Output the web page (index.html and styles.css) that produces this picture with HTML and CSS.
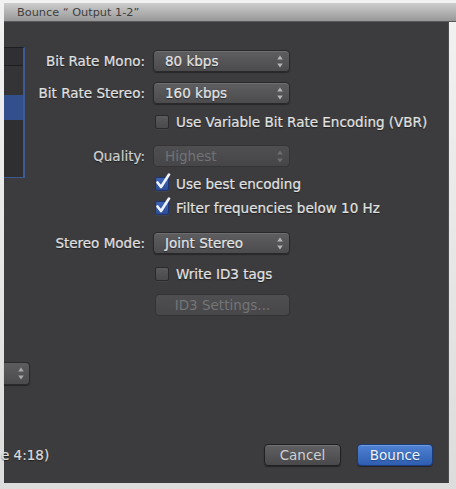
FILE: index.html
```html
<!DOCTYPE html>
<html>
<head>
<meta charset="utf-8">
<link rel="stylesheet" href="styles.css">
</head>
<body>
<div class="window">
  <div class="titlebar">Bounce “ Output 1-2”</div>
  <div class="panel">
    <div class="main">
      <div class="sidebar">
        <div class="list">
          <div class="list-row first"></div>
          <div class="list-row second"></div>
          <div class="list-row selected"></div>
          <div class="list-row rest"></div>
        </div>
        <div class="side-popup">
          <svg class="stepper" width="6" height="13" viewBox="0 0 6 13"><path d="M3 0.5 L5.8 4.5 H0.2 Z M3 12.5 L5.8 8.5 H0.2 Z" fill="#a8a8a8"/></svg>
        </div>
      </div>
      <div class="form">
        <div class="row">
          <span class="label">Bit Rate Mono:</span>
          <div class="popup"><span>80 kbps</span>
            <svg class="stepper" width="6" height="13" viewBox="0 0 6 13"><path d="M3 0.5 L5.8 4.5 H0.2 Z M3 12.5 L5.8 8.5 H0.2 Z" fill="#b4b4b4"/></svg>
          </div>
        </div>
        <div class="row mt-10">
          <span class="label">Bit Rate Stereo:</span>
          <div class="popup"><span>160 kbps</span>
            <svg class="stepper" width="6" height="13" viewBox="0 0 6 13"><path d="M3 0.5 L5.8 4.5 H0.2 Z M3 12.5 L5.8 8.5 H0.2 Z" fill="#b4b4b4"/></svg>
          </div>
        </div>
        <div class="row check-row mt-10">
          <span class="label"></span>
          <label class="check"><span class="box"></span><span>Use Variable Bit Rate Encoding (VBR)</span></label>
        </div>
        <div class="row mt-15">
          <span class="label dim">Quality:</span>
          <div class="popup disabled"><span>Highest</span>
            <svg class="stepper" width="6" height="13" viewBox="0 0 6 13"><path d="M3 0.5 L5.8 4.5 H0.2 Z M3 12.5 L5.8 8.5 H0.2 Z" fill="#6e6e6e"/></svg>
          </div>
        </div>
        <div class="row check-row mt-9">
          <span class="label"></span>
          <label class="check"><span class="box on"><svg class="tick" width="16" height="18" viewBox="0 0 16 18"><path d="M2.5 9.5 L6 14 L14 1.5" fill="none" stroke="#eef3ff" stroke-width="2.6" stroke-linecap="round" stroke-linejoin="round"/></svg></span><span>Use best encoding</span></label>
        </div>
        <div class="row check-row mt-8">
          <span class="label"></span>
          <label class="check"><span class="box on"><svg class="tick" width="16" height="18" viewBox="0 0 16 18"><path d="M2.5 9.5 L6 14 L14 1.5" fill="none" stroke="#eef3ff" stroke-width="2.6" stroke-linecap="round" stroke-linejoin="round"/></svg></span><span>Filter frequencies below 10 Hz</span></label>
        </div>
        <div class="row mt-16">
          <span class="label">Stereo Mode:</span>
          <div class="popup"><span>Joint Stereo</span>
            <svg class="stepper" width="6" height="13" viewBox="0 0 6 13"><path d="M3 0.5 L5.8 4.5 H0.2 Z M3 12.5 L5.8 8.5 H0.2 Z" fill="#b4b4b4"/></svg>
          </div>
        </div>
        <div class="row check-row mt-12">
          <span class="label"></span>
          <label class="check"><span class="box"></span><span>Write ID3 tags</span></label>
        </div>
        <div class="row mt-12">
          <span class="label"></span>
          <div class="button disabled wide">ID3 Settings...</div>
        </div>
      </div>
    </div>
    <div class="footer">
      <div class="status">e 4:18)</div>
      <div class="spacer"></div>
      <div class="button cancel">Cancel</div>
      <div class="button primary">Bounce</div>
    </div>
  </div>
</div>
</body>
</html>
```

FILE: styles.css
```css
html, body {
  margin: 0;
  padding: 0;
}
body {
  width: 456px;
  height: 489px;
  overflow: hidden;
  background: linear-gradient(#f2f2f2, #dcdcdc);
  font-family: "DejaVu Sans", "Liberation Sans", sans-serif;
  font-size: 13.5px;
  color: #e2e2e2;
}
.window {
  margin: 3px 0 0 4px;
  width: 452px;
}
.titlebar {
  height: 18px;
  line-height: 19px;
  padding-left: 13px;
  font-size: 11.3px;
  color: #3e3e3e;
  background: linear-gradient(#cdcdcd, #a8a8a8 70%, #979797);
  border-bottom: 1px solid #5a5a5a;
  white-space: nowrap;
}
.panel {
  height: 461px;
  width: 444px;
  background: #3c3c3e;
  border-right: 1px solid #4c4c4e;
  display: flex;
  flex-direction: column;
}
.main {
  display: flex;
  flex: 1;
}
.sidebar {
  width: 26px;
  display: flex;
  flex-direction: column;
}
.list {
  margin-top: 25px;
  width: 19px;
  height: 129px;
  border-top: 1px solid #1e1e22;
  border-right: 2px solid #3e5a96;
  border-bottom: 1px solid #3e5a96;
  display: flex;
  flex-direction: column;
  background: #2f2f31;
}
.list-row.first {
  height: 17px;
  background: #303034;
  border-bottom: 1px solid #1f1f22;
}
.list-row.second {
  height: 29px;
  background: #343437;
}
.list-row.selected {
  height: 25px;
  background: #33508c;
}
.list-row.rest {
  flex: 1;
  background: #2f2f31;
}
.side-popup {
  margin-top: 184px;
  width: 20px;
  height: 21px;
  border: 1px solid #2a2a2c;
  border-left: none;
  border-radius: 0 4px 4px 0;
  background: linear-gradient(#5d5d60, #4b4b4e);
  box-shadow: 0 1px 1px rgba(0, 0, 0, 0.4);
  display: flex;
  align-items: center;
  justify-content: flex-end;
  padding-right: 5px;
  box-sizing: content-box;
}
.form {
  padding-top: 28px;
  display: flex;
  flex-direction: column;
}
.row {
  display: grid;
  grid-template-columns: 115px auto;
  column-gap: 8px;
  align-items: center;
}
.mt-8 { margin-top: 8px; }
.mt-9 { margin-top: 9px; }
.mt-10 { margin-top: 10px; }
.mt-12 { margin-top: 12px; }
.mt-15 { margin-top: 15px; }
.mt-16 { margin-top: 16px; }
.label {
  text-align: right;
  white-space: nowrap;
  color: #e0e0e0;
  -webkit-text-stroke: 0.2px #e0e0e0;
  text-shadow: 0 1px 1px rgba(0, 0, 0, 0.5);
}
.label.dim {
  color: #cfcfcf;
  -webkit-text-stroke: 0.2px #cfcfcf;
}
.popup {
  height: 20px;
  box-sizing: content-box;
  border: 1px solid #29292b;
  border-radius: 4px;
  background: linear-gradient(#5e5e61, #4c4c4f);
  box-shadow: inset 0 1px 0 rgba(255, 255, 255, 0.1), 0 1px 1px rgba(0, 0, 0, 0.35);
  display: flex;
  align-items: center;
  justify-content: space-between;
  padding: 0 6px 0 0;
  width: 129px;
}
.popup span {
  padding-left: 11px;
  color: #e4e4e4;
  -webkit-text-stroke: 0.2px #e4e4e4;
  text-shadow: 0 1px 1px rgba(0, 0, 0, 0.5);
  white-space: nowrap;
}
.popup.disabled {
  background: linear-gradient(#4f4f52, #464649);
  border-color: #343436;
  box-shadow: none;
}
.popup.disabled span {
  color: #727274;
  -webkit-text-stroke: 0;
  text-shadow: none;
}
.stepper {
  display: block;
}
.check-row {
  height: 16px;
}
.check {
  display: flex;
  align-items: center;
  gap: 7px;
  margin-left: 2px;
  white-space: nowrap;
  color: #e2e2e2;
  -webkit-text-stroke: 0.2px #e2e2e2;
  text-shadow: 0 1px 1px rgba(0, 0, 0, 0.5);
}
.box {
  position: relative;
  width: 12px;
  height: 12px;
  border: 1px solid #2a2a2c;
  border-radius: 2px;
  background: linear-gradient(#5a5a5d, #49494c);
  box-shadow: 0 1px 0 rgba(255, 255, 255, 0.05);
  flex: none;
}
.box.on {
  background: linear-gradient(#3e64b4, #2c4d95);
  border-color: #1d3570;
}
.tick {
  position: absolute;
  left: -1px;
  top: -5px;
}
.button {
  height: 20px;
  box-sizing: content-box;
  border-radius: 4px;
  display: flex;
  align-items: center;
  justify-content: center;
  white-space: nowrap;
}
.button.wide {
  width: 133px;
  margin-left: 2px;
}
.button.disabled {
  border: 1px solid #333335;
  background: linear-gradient(#4f4f52, #47474a);
  color: #747476;
}
.footer {
  display: flex;
  align-items: center;
  height: 22px;
  padding-bottom: 17px;
  padding-right: 15px;
}
.status {
  margin-left: -3px;
  color: #dcdcdc;
  -webkit-text-stroke: 0.2px #dcdcdc;
  text-shadow: 0 1px 1px rgba(0, 0, 0, 0.5);
}
.spacer {
  flex: 1;
}
.cancel {
  width: 75px;
  border: 1px solid #202022;
  background: linear-gradient(#606063, #49494c);
  box-shadow: inset 0 1px 0 rgba(255, 255, 255, 0.12), 0 1px 1px rgba(0, 0, 0, 0.4);
  color: #cfcfcf;
}
.primary {
  width: 74px;
  margin-left: 16px;
  border: 1px solid #1b3a78;
  background: linear-gradient(#4f82d4, #2f5eb0);
  box-shadow: inset 0 1px 0 rgba(255, 255, 255, 0.2), 0 1px 1px rgba(0, 0, 0, 0.4);
  color: #eef3fc;
  text-shadow: 0 1px 1px rgba(0, 0, 0, 0.3);
}
```
